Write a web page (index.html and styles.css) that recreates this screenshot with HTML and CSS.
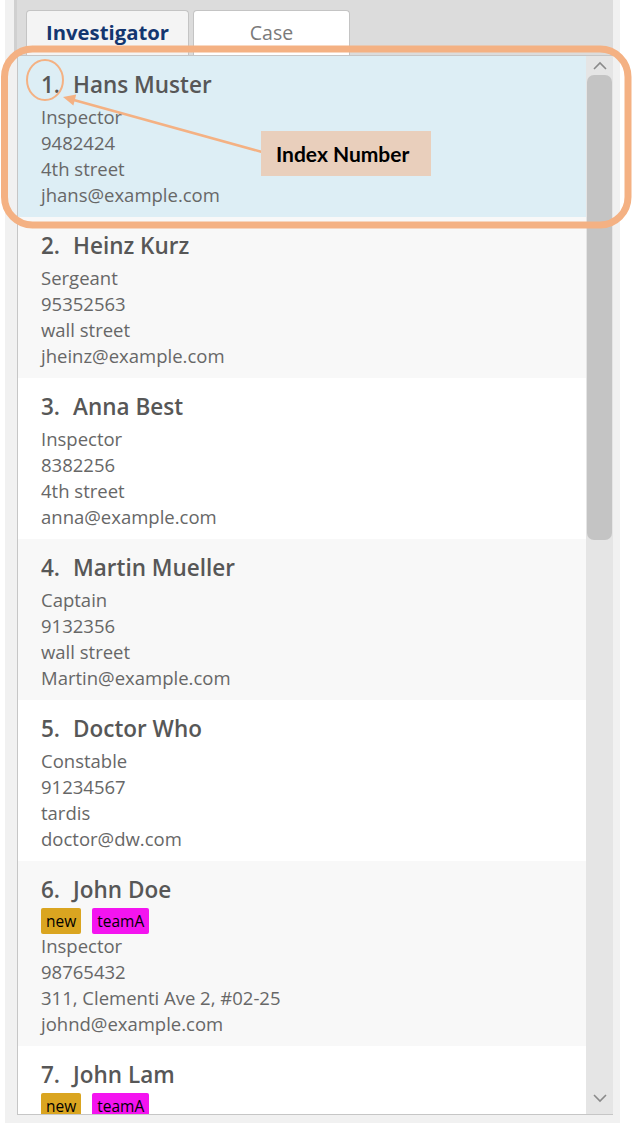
FILE: index.html
```html
<!DOCTYPE html>
<html>
<head>
<meta charset="utf-8">
<link rel="stylesheet" href="styles.css">
</head>
<body>
<div class="stage">
  <div class="window">
    <div class="tabpane">
      <div class="tabbar">
        <div class="tab tab-active">Investigator</div>
        <div class="tab tab-case">Case</div>
      </div>
      <div class="listview">
        <div class="list">
          <div class="card selected">
            <div class="name"><span class="idx">1.</span><span>Hans Muster</span></div>
            <div class="line">Inspector</div>
            <div class="line">9482424</div>
            <div class="line">4th street</div>
            <div class="line">jhans@example.com</div>
          </div>
          <div class="card odd">
            <div class="name"><span class="idx">2.</span><span>Heinz Kurz</span></div>
            <div class="line">Sergeant</div>
            <div class="line">95352563</div>
            <div class="line">wall street</div>
            <div class="line">jheinz@example.com</div>
          </div>
          <div class="card">
            <div class="name"><span class="idx">3.</span><span>Anna Best</span></div>
            <div class="line">Inspector</div>
            <div class="line">8382256</div>
            <div class="line">4th street</div>
            <div class="line">anna@example.com</div>
          </div>
          <div class="card odd">
            <div class="name"><span class="idx">4.</span><span>Martin Mueller</span></div>
            <div class="line">Captain</div>
            <div class="line">9132356</div>
            <div class="line">wall street</div>
            <div class="line">Martin@example.com</div>
          </div>
          <div class="card">
            <div class="name"><span class="idx">5.</span><span>Doctor Who</span></div>
            <div class="line">Constable</div>
            <div class="line">91234567</div>
            <div class="line">tardis</div>
            <div class="line">doctor@dw.com</div>
          </div>
          <div class="card odd">
            <div class="name"><span class="idx">6.</span><span>John Doe</span></div>
            <div class="tags"><span class="tag tag-new">new</span><span class="tag tag-team">teamA</span></div>
            <div class="line">Inspector</div>
            <div class="line">98765432</div>
            <div class="line">311, Clementi Ave 2, #02-25</div>
            <div class="line">johnd@example.com</div>
          </div>
          <div class="card">
            <div class="name"><span class="idx">7.</span><span>John Lam</span></div>
            <div class="tags"><span class="tag tag-new">new</span><span class="tag tag-team">teamA</span></div>
          </div>
        </div>
        <div class="scrollbar">
          <div class="sb-btn sb-up">
            <svg width="16" height="10" viewBox="0 0 16 10"><polyline points="2,8 8,2 14,8" fill="none" stroke="#8a8a8a" stroke-width="1.6"/></svg>
          </div>
          <div class="sb-track"><div class="sb-thumb"></div></div>
          <div class="sb-btn sb-down">
            <svg width="16" height="10" viewBox="0 0 16 10"><polyline points="2,2 8,8 14,2" fill="none" stroke="#8a8a8a" stroke-width="1.6"/></svg>
          </div>
        </div>
      </div>
    </div>
  </div>
  <svg class="annot" width="633" height="1125" viewBox="0 0 633 1125">
    <rect x="4.5" y="49" width="623.5" height="176" rx="28" ry="28" fill="none" stroke="#f4b183" stroke-width="7"/>
    <ellipse cx="45" cy="80" rx="18" ry="20" fill="none" stroke="#f4b183" stroke-width="2"/>
    <line x1="262" y1="152" x2="72" y2="99.5" stroke="#f4b183" stroke-width="2.5"/>
    <polygon points="63,97 76.2,94.6 73.4,105.4" fill="#f4b183"/>
  </svg>
  <div class="callout">Index Number</div>
</div>
</body>
</html>
```

FILE: styles.css
```css
* { box-sizing: border-box; }

html, body {
  margin: 0;
  padding: 0;
  background: #ffffff;
}

.stage {
  position: relative;
  width: 633px;
  height: 1125px;
  overflow: hidden;
  font-family: "Open Sans", "Noto Sans", sans-serif;
}

.window {
  margin-left: 5px;
  width: 615px;
  height: 1123px;
  background: #f1f1f1;
  padding: 0 7px 8px 9px;
}

.tabpane {
  height: 1115px;
  display: flex;
  flex-direction: column;
}

.tabbar {
  height: 55px;
  flex: none;
  background: #dcdcdc;
  border-left: 3px solid #d0d0d0;
  display: flex;
  align-items: flex-end;
  gap: 4px;
  padding-left: 9px;
}

.tab {
  height: 45px;
  border: 1px solid #c4c4c4;
  border-bottom: none;
  border-radius: 4px 4px 0 0;
  display: flex;
  align-items: center;
  justify-content: center;
  padding-bottom: 2px;
}

.tab-active {
  width: 163px;
  background: #f4f4f4;
  color: #133670;
  font-weight: 700;
  font-size: 20.3px;
}

.tab-case {
  width: 157px;
  background: #ffffff;
  color: #7a7a7a;
  font-size: 19.5px;
}

.listview {
  flex: 1;
  margin-left: 3px;
  display: flex;
  border-top: 1px solid #c6c6c6;
  border-bottom: 1px solid #c6c6c6;
  border-left: 1px solid #c6c6c6;
  min-height: 0;
}

.list {
  flex: 1;
  overflow: hidden;
  background: #ffffff;
}

.card {
  padding: 15px 0 9px 23px;
  background: #ffffff;
}

.card.odd { background: #f8f8f8; }
.card.selected { background: #ddeef5; }

.name {
  display: flex;
  gap: 13px;
  height: 28px;
  line-height: 28px;
  font-size: 22.5px;
  font-weight: 600;
  color: #575757;
  margin-bottom: 5px;
}

.line {
  height: 26px;
  line-height: 26px;
  font-size: 18.5px;
  color: #676767;
  white-space: nowrap;
}

.tags {
  height: 24px;
  display: flex;
  align-items: center;
  gap: 11px;
}

.tag {
  height: 26px;
  line-height: 26px;
  padding: 0 5px;
  border-radius: 2px;
  font-size: 15.5px;
  color: #000000;
}

.tag-new { background: #daa520; }
.tag-team { background: #f414f0; }

.scrollbar {
  width: 27px;
  flex: none;
  background: #e5e5e5;
  display: flex;
  flex-direction: column;
}

.sb-btn {
  height: 19px;
  flex: none;
  display: flex;
  align-items: center;
  justify-content: center;
}

.sb-down {
  height: 21px;
  align-items: flex-start;
}

.sb-track {
  flex: 1;
  padding: 0 1px;
}

.sb-thumb {
  height: 465px;
  background: #c4c4c4;
  border-radius: 7px;
}

.annot {
  position: absolute;
  left: 0;
  top: 0;
  pointer-events: none;
}

.callout {
  position: absolute;
  left: 261px;
  top: 131px;
  width: 170px;
  height: 45px;
  background: #e9cfbc;
  padding-left: 15px;
  display: flex;
  align-items: center;
  font-family: "Lato", "Liberation Sans", sans-serif;
  font-weight: 700;
  font-size: 21px;
  color: #000000;
}
```
